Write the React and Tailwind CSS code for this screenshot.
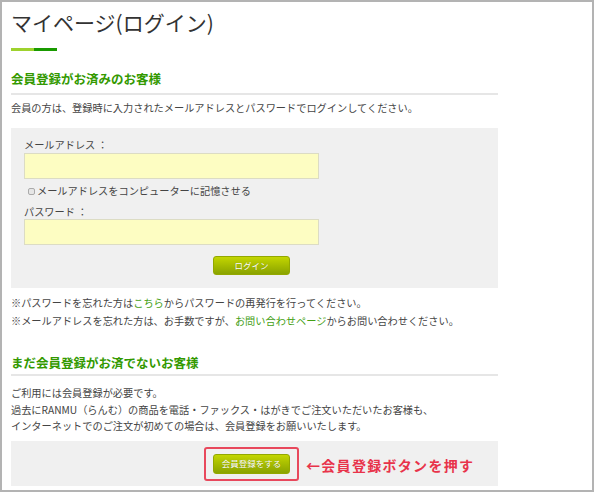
// ログインページ（マイページ）の再現
const FONT = { fontFamily: '"Noto Sans CJK JP", "Noto Sans", sans-serif' };

function GreenButton({ label, className = '' }) {
  return (
    <button
      type="button"
      className={`flex items-center justify-center rounded-[3px] border border-[#93a800] bg-gradient-to-b from-[#c3d600] to-[#8aa300] text-[8.5px] leading-none text-white [text-shadow:0_0_1px_rgba(0,0,0,0.25)] ${className}`}
    >
      {label}
    </button>
  );
}

function SectionHeading({ children, className = '' }) {
  return (
    <h2 className={`border-b-2 border-[#e6e6e6] text-[12.5px] font-bold leading-[16px] text-[#339900] ${className}`}>
      {children}
    </h2>
  );
}

export default function App() {
  return (
    <div style={FONT} className="box-border h-[492px] w-[594px] overflow-hidden border-2 border-[#b3b3b3] bg-white pl-[9px] pt-[8px] text-[#444]">
      <div className="w-[487px]">
        <h1 className="text-[21px] font-normal leading-[24px] text-[#333]">マイページ(ログイン)</h1>
        <div className="mt-[14px] flex h-[3px]">
          <div className="w-[23px] bg-[#9ed22e]" />
          <div className="w-[23px] bg-[#199a00]" />
        </div>

        <SectionHeading className="mt-[20px] pb-[6px]">会員登録がお済みのお客様</SectionHeading>
        <p className="mt-[5px] text-[10.2px] leading-[16px]">
          会員の方は、登録時に入力されたメールアドレスとパスワードでログインしてください。
        </p>

        <div className="mt-[12px] h-[160px] bg-[#f0f0f0] pl-[13px] pt-[10px] text-[10.2px]">
          <div className="leading-[14px]">メールアドレス ：</div>
          <div className="mt-[1px] h-[26px] w-[295px] border border-[#dcdcc4] bg-[#fdfdc2]" />
          <label className="mt-[5px] flex items-center leading-[14px]">
            <span className="ml-[4px] mr-[2px] inline-block h-[7px] w-[7px] rounded-[2px] border border-[#aaa] bg-[#e6e6e6]" />
            メールアドレスをコンピューターに記憶させる
          </label>
          <div className="mt-[7px] leading-[14px]">パスワード ：</div>
          <div className="h-[26px] w-[295px] border border-[#dcdcc4] bg-[#fdfdc2]" />
          <GreenButton label="ログイン" className="ml-[189px] mt-[11px] h-[19px] w-[77px]" />
        </div>

        <div className="mt-[6px] text-[10.2px] leading-[18px]">
          <p>
            ※パスワードを忘れた方は<span className="text-[#44a014]">こちら</span>からパスワードの再発行を行ってください。
          </p>
          <p>
            ※メールアドレスを忘れた方は、お手数ですが、<span className="text-[#44a014]">お問い合わせページ</span>からお問い合わせください。
          </p>
        </div>

        <SectionHeading className="mt-[25px] pb-[3px]">まだ会員登録がお済でないお客様</SectionHeading>
        <div className="mt-[9px] text-[10.2px] leading-[16.5px]">
          <p>ご利用には会員登録が必要です。</p>
          <p>過去にRANMU（らんむ）の商品を電話・ファックス・はがきでご注文いただいたお客様も、</p>
          <p>インターネットでのご注文が初めての場合は、会員登録をお願いいたします。</p>
        </div>

        <div className="mt-[6px] flex h-[45px] items-start bg-[#f0f0f0] pl-[193px] pt-[6px]">
          <div className="flex h-[34px] w-[95px] items-center justify-center rounded-[3px] border-2 border-[#e8485c]">
            <GreenButton label="会員登録をする" className="h-[20px] w-[77px]" />
          </div>
          <span className="ml-[7px] self-center pb-[2px] text-[14px] font-bold tracking-[1.3px] text-[#e8334a]">
            ←会員登録ボタンを押す
          </span>
        </div>
      </div>
    </div>
  );
}
